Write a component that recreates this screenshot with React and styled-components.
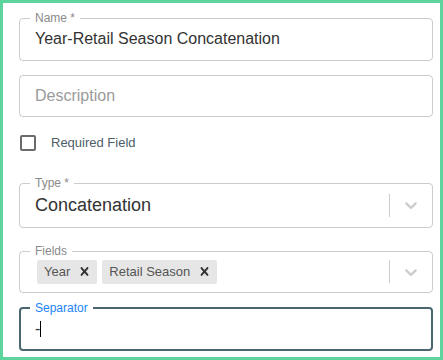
import styled, { createGlobalStyle } from "styled-components";

const GlobalStyle = createGlobalStyle`
  html, body {
    margin: 0;
    padding: 0;
    background: #fff;
  }
  body {
    font-family: "Liberation Sans", Arial, sans-serif;
  }
`;

const Frame = styled.div`
  box-sizing: border-box;
  width: 443px;
  height: 360px;
  border: 3px solid #5dd39e;
  padding: 8px 7px 0 16px;
  display: flex;
  flex-direction: column;
  background: #fff;
`;

const Field = styled.fieldset`
  margin: ${(p) => p.$mt || 0}px 0 0;
  padding: 0;
  min-width: 0;
  border: ${(p) => (p.$focused ? "2px solid #4a6770" : "1px solid #cccccc")};
  border-radius: 4px;
`;

const Legend = styled.legend`
  margin-left: ${(p) => (p.$focused ? 9 : 10)}px;
  padding: 0 5px;
  font-size: 12px;
  line-height: 14px;
  color: ${(p) => (p.$focused ? "#2185f5" : "#8a8a8a")};
`;

const Row = styled.div`
  display: flex;
  align-items: center;
  height: ${(p) => p.$h}px;
  margin-top: ${(p) => (p.$legend ? (p.$focused ? -6 : -7) : 0)}px;
  padding-left: ${(p) => p.$pl || 15}px;
`;

const Value = styled.div`
  flex: 1;
  min-width: 0;
  font-size: ${(p) => p.$size || 16}px;
  color: ${(p) => (p.$placeholder ? "#9a9a9a" : "#333")};
  white-space: nowrap;
`;

const Caret = styled.span`
  display: inline-block;
  width: 1px;
  height: 16px;
  background: #000;
  vertical-align: -3px;
`;

const CheckRow = styled.label`
  display: flex;
  align-items: center;
  gap: 15px;
  height: 17px;
  margin-top: 17px;
  padding-left: 1px;
  font-size: 13px;
  color: #4d5e69;
`;

const Box = styled.span`
  box-sizing: border-box;
  width: 16px;
  height: 16px;
  border: 2px solid #6b6b6b;
  border-radius: 2px;
`;

const Chips = styled.div`
  flex: 1;
  display: flex;
  gap: 5px;
`;

const Chip = styled.div`
  display: inline-flex;
  align-items: center;
  height: 24px;
  background: #e6e6e6;
  border-radius: 2px;
`;

const ChipLabel = styled.span`
  padding-left: 7px;
  font-size: 13px;
  color: #555;
`;

const ChipRemove = styled.span`
  display: flex;
  padding: 0 4px 0 6px;
  color: #333;
`;

const IndicatorSep = styled.span`
  width: 1px;
  height: 23px;
  background: #cccccc;
`;

const Indicator = styled.span`
  display: flex;
  justify-content: center;
  width: 42px;
  color: #cccccc;
`;

const Chevron = () => (
  <svg width="20" height="20" viewBox="0 0 20 20" fill="currentColor">
    <path d="M4.516 7.548c0.436-0.446 1.043-0.481 1.576 0l3.908 3.747 3.908-3.747c0.533-0.481 1.141-0.446 1.574 0 0.436 0.445 0.408 1.197 0 1.615-0.406 0.418-4.695 4.502-4.695 4.502-0.217 0.223-0.502 0.335-0.787 0.335s-0.57-0.112-0.789-0.335c0 0-4.287-4.084-4.695-4.502s-0.436-1.17 0-1.615z" />
  </svg>
);

const Cross = () => (
  <svg width="17" height="17" viewBox="0 0 20 20" fill="currentColor">
    <path d="M14.348 14.849c-0.469 0.469-1.229 0.469-1.697 0l-2.651-3.030-2.651 3.029c-0.469 0.469-1.229 0.469-1.697 0-0.469-0.469-0.469-1.229 0-1.697l2.758-3.15-2.759-3.152c-0.469-0.469-0.469-1.228 0-1.697s1.228-0.469 1.697 0l2.652 3.031 2.651-3.031c0.469-0.469 1.228-0.469 1.697 0s0.469 1.229 0 1.697l-2.758 3.152 2.758 3.15c0.469 0.469 0.469 1.229 0 1.698z" />
  </svg>
);

function App() {
  const fields = ["Year", "Retail Season"];

  return (
    <>
      <GlobalStyle />
      <Frame>
        <Field>
          <Legend>Name *</Legend>
          <Row $legend $h={42}>
            <Value>Year-Retail Season Concatenation</Value>
          </Row>
        </Field>

        <Field $mt={14}>
          <Row $h={40}>
            <Value $placeholder>Description</Value>
          </Row>
        </Field>

        <CheckRow>
          <Box />
          Required Field
        </CheckRow>

        <Field $mt={25}>
          <Legend>Type *</Legend>
          <Row $legend $h={44}>
            <Value $size={18}>Concatenation</Value>
            <IndicatorSep />
            <Indicator>
              <Chevron />
            </Indicator>
          </Row>
        </Field>

        <Field $mt={16}>
          <Legend>Fields</Legend>
          <Row $legend $h={41} $pl={17}>
            <Chips>
              {fields.map((f) => (
                <Chip key={f}>
                  <ChipLabel>{f}</ChipLabel>
                  <ChipRemove>
                    <Cross />
                  </ChipRemove>
                </Chip>
              ))}
            </Chips>
            <IndicatorSep />
            <Indicator>
              <Chevron />
            </Indicator>
          </Row>
        </Field>

        <Field $mt={8} $focused>
          <Legend $focused>Separator</Legend>
          <Row $legend $focused $h={40} $pl={14}>
            <Value>
              -<Caret />
            </Value>
          </Row>
        </Field>
      </Frame>
    </>
  );
}

export default App;
